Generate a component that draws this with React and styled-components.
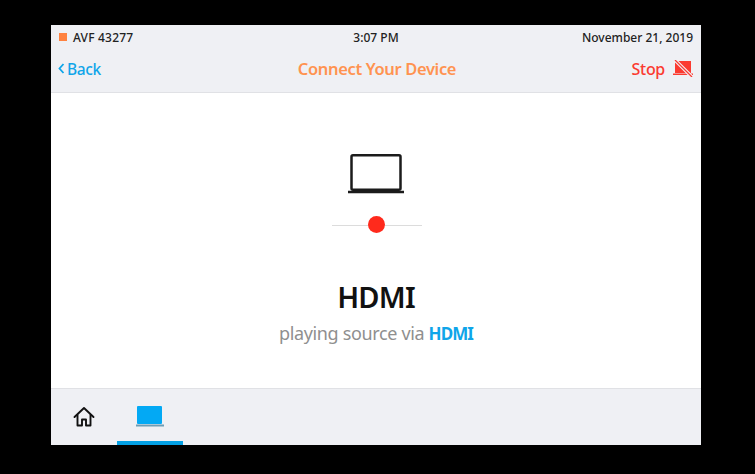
import styled, { createGlobalStyle } from "styled-components"

const GlobalStyle = createGlobalStyle`
  html, body {
    margin: 0;
    height: 100%;
    background: #000;
  }
  body {
    font-family: "Noto Sans", "Open Sans", sans-serif;
  }
`

export default function App() {
  return (
    <>
      <GlobalStyle />
      <Page>
        <Panel>
          <Header>
            <StatusRow>
              <RoomName><RoomDot />AVF 43277</RoomName>
              <StatusText>3:07 PM</StatusText>
              <StatusText>November 21, 2019</StatusText>
            </StatusRow>
            <NavRow>
              <BackLink>
                <svg width="7" height="11" viewBox="0 0 7 11" fill="none">
                  <path d="M5.500 1 1.500 5.500l4 4.500" stroke="#0fa5e9" strokeWidth="1.8" />
                </svg>
                Back
              </BackLink>
              <Title>Connect Your Device</Title>
              <StopButton>
                Stop
                <svg width="20" height="17" viewBox="0 0 20 17">
                  <path d="M2 1h16v12H2z M0 13.500h20V15H0z" fill="#fb3a30" />
                  <path d="M2 0 19 17" stroke="#f1f2f6" strokeWidth="3.400" />
                  <path d="M2 0 19 17" stroke="#fb3a30" strokeWidth="1.300" />
                </svg>
              </StopButton>
            </NavRow>
          </Header>

          <Main>
            <DeviceIcon width="56" height="40" viewBox="0 0 56 40" fill="none">
              <rect x="3.500" y="1.250" width="49" height="34.500" rx="1.500" stroke="#1b1b1b" strokeWidth="2.500" />
              <path d="M0 38h56" stroke="#1b1b1b" strokeWidth="2.600" />
            </DeviceIcon>
            <Indicator><IndicatorDot /></Indicator>
            <SourceName>HDMI</SourceName>
            <SourceNote>playing source via <strong>HDMI</strong></SourceNote>
          </Main>

          <Footer>
            <HomeTab>
              <svg width="22" height="22" viewBox="0 0 22 22" fill="none" stroke="#111" strokeWidth="1.900" strokeLinejoin="round" strokeLinecap="round">
                <path d="M1.500 11 11 2l9.500 9" />
                <path d="M4.500 9v10.500h4.500v-6h4v6h4.500V9" />
              </svg>
            </HomeTab>
            <LaptopTab>
              <svg width="28" height="22" viewBox="0 0 28 22">
                <rect x="1" y="0" width="25" height="18" rx="1" fill="#03a9f4" />
                <rect x="0" y="18.500" width="28" height="2" fill="#6d9db5" />
              </svg>
            </LaptopTab>
          </Footer>
        </Panel>
      </Page>
    </>
  )
}

const Page = styled.div`
  width: 755px;
  height: 474px;
  padding: 25px 54px 29px 51px;
  box-sizing: border-box;
  background: #000;
`
const Panel = styled.div`
  height: 100%;
  display: flex;
  flex-direction: column;
  background: #fff;
`
const Header = styled.header`
  height: 68px;
  box-sizing: border-box;
  padding: 0 8px;
  background: #eff0f4;
  border-bottom: 1px solid #e0e1e5;
`
const StatusRow = styled.div`
  height: 24px;
  display: grid;
  grid-template-columns: 1fr auto 1fr;
  align-items: center;
  font-size: 12px;
  font-weight: 500;
  color: #222;
  & > :last-child {
    text-align: right;
  }
`
const RoomName = styled.div`
  display: flex;
  align-items: center;
  gap: 6px;
  letter-spacing: 0.2px;
`
const RoomDot = styled.span`
  width: 8px;
  height: 8px;
  background: #ff8240;
`
const StatusText = styled.div``
const NavRow = styled.div`
  height: 39px;
  display: grid;
  grid-template-columns: 1fr auto 1fr;
  align-items: center;
  font-size: 16px;
  font-weight: 500;
  letter-spacing: -0.3px;
`
const BackLink = styled.div`
  display: flex;
  align-items: center;
  gap: 2px;
  margin-left: -1px;
  font-size: 15.500px;
  letter-spacing: -0.4px;
  color: #0fa5e9;
`
const Title = styled.div`
  padding-left: 2px;
  font-size: 16.500px;
  font-weight: 600;
  letter-spacing: -0.35px;
  color: #ff9350;
`
const StopButton = styled.div`
  display: flex;
  justify-content: flex-end;
  align-items: center;
  gap: 8px;
  color: #fb3a30;
`
const Main = styled.main`
  flex: 1;
  display: flex;
  flex-direction: column;
  align-items: center;
  padding: 61px 0 0 2px;
`
const DeviceIcon = styled.svg`
  margin-right: 2px;
`
const Indicator = styled.div`
  width: 90px;
  height: 17px;
  margin-top: 23px;
  display: flex;
  justify-content: center;
  align-items: center;
  background: linear-gradient(#dcdcdc, #dcdcdc) center / 100% 1px no-repeat;
`
const IndicatorDot = styled.span`
  width: 17px;
  height: 17px;
  margin: 0 1px 2px 0;
  border-radius: 50%;
  background: #ff2a1c;
`
const SourceName = styled.h1`
  margin: 43px 2px 0 0;
  font-size: 29px;
  line-height: 40px;
  font-weight: 600;
  letter-spacing: -0.8px;
  color: #111;
`
const SourceNote = styled.p`
  margin: 4px 2px 0 0;
  font-size: 18px;
  line-height: 24px;
  letter-spacing: -0.35px;
  color: #8f8f8f;
  strong {
    font-size: 17px;
    font-weight: 700;
    letter-spacing: -0.9px;
    color: #0fa5e9;
  }
`
const Footer = styled.footer`
  height: 57px;
  box-sizing: border-box;
  display: flex;
  padding-left: 22px;
  background: #eff0f4;
  border-top: 1px solid #e0e1e5;
`
const HomeTab = styled.div`
  width: 22px;
  padding-top: 17px;
  line-height: 0;
`
const LaptopTab = styled.div`
  width: 66px;
  margin-left: 22px;
  padding-top: 17px;
  box-sizing: border-box;
  display: flex;
  justify-content: center;
  line-height: 0;
  border-bottom: 4px solid #03a0e4;
`
